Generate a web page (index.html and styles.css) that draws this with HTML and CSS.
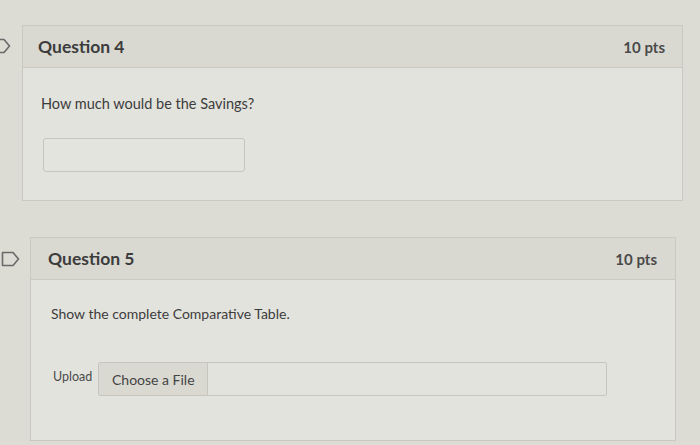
FILE: index.html
```html
<!DOCTYPE html>
<html>
<head>
<meta charset="utf-8">
<link rel="stylesheet" href="styles.css">
</head>
<body>
<div class="page">
  <section class="card card-q4">
    <div class="flag flag-q4">
      <svg width="20" height="16" viewBox="0 0 20 16"><path d="M1.5 1.5 H12 L17.5 8 L12 14.5 H1.5 Z" fill="none" stroke="#6a6a6a" stroke-width="1.6" stroke-linejoin="round"/></svg>
    </div>
    <header class="card-head">
      <h2 class="q-title">Question 4</h2>
      <span class="pts">10 pts</span>
    </header>
    <div class="card-body body-q4">
      <p class="q-text">How much would be the Savings?</p>
      <div class="answer-box"></div>
    </div>
  </section>

  <section class="card card-q5">
    <div class="flag flag-q5">
      <svg width="20" height="16" viewBox="0 0 20 16"><path d="M1.5 1.5 H12 L17.5 8 L12 14.5 H1.5 Z" fill="none" stroke="#6a6a6a" stroke-width="1.6" stroke-linejoin="round"/></svg>
    </div>
    <header class="card-head">
      <h2 class="q-title">Question 5</h2>
      <span class="pts">10 pts</span>
    </header>
    <div class="card-body body-q5">
      <p class="q-text">Show the complete Comparative Table.</p>
      <div class="upload-row">
        <span class="upload-label">Upload</span>
        <div class="file-field">
          <span class="file-btn">Choose a File</span>
        </div>
      </div>
    </div>
  </section>
</div>
</body>
</html>
```

FILE: styles.css
```css
html, body {
  margin: 0;
  padding: 0;
}
body {
  width: 700px;
  height: 445px;
  overflow: hidden;
  background: #dcdcd5;
  font-family: Lato, "Liberation Sans", sans-serif;
  color: #3b3b3b;
}
.page {
  display: flex;
  flex-direction: column;
  padding-top: 25px;
}
.card {
  position: relative;
  background: #e3e3dd;
  border: 1px solid #c9c9c2;
  box-sizing: border-box;
}
.card-q4 {
  margin-left: 22px;
  width: 661px;
  height: 176px;
}
.card-q5 {
  margin-left: 30px;
  margin-top: 36px;
  width: 646px;
  height: 204px;
}
.flag {
  position: absolute;
}
.flag-q4 {
  left: -31px;
  top: 12px;
}
.flag-q5 {
  left: -30px;
  top: 13px;
}
.card-head {
  display: flex;
  align-items: center;
  justify-content: space-between;
  height: 42px;
  background: #d9d9d2;
  border-bottom: 1px solid #c9c9c2;
  box-sizing: border-box;
}
.card-q4 .card-head {
  padding: 0 17px 0 15px;
}
.card-q5 .card-head {
  padding: 0 18px 0 17px;
}
.q-title {
  margin: 0;
  font-size: 17.5px;
  font-weight: 700;
  color: #3c3c3c;
}
.pts {
  font-size: 15px;
  font-weight: 700;
  color: #4a4a4a;
}
.card-body {
  display: flex;
  flex-direction: column;
}
.body-q4 {
  padding: 27px 0 0 18px;
}
.body-q5 {
  padding: 25px 0 0 20px;
}
.q-text {
  margin: 0;
  font-size: 14px;
  color: #3c3c3c;
}
.body-q4 .q-text {
  font-size: 14.5px;
}
.answer-box {
  margin-top: 26px;
  margin-left: 2px;
  width: 202px;
  height: 34px;
  border: 1px solid #c6c6bf;
  border-radius: 3px;
  box-sizing: border-box;
  background: #e4e4de;
}
.upload-row {
  display: flex;
  align-items: center;
  margin-top: 40px;
  margin-left: 2px;
}
.upload-label {
  font-size: 12.5px;
  color: #4a4a4a;
  width: 45px;
  margin-top: -6px;
}
.file-field {
  display: flex;
  align-items: stretch;
  width: 509px;
  height: 34px;
  border: 1px solid #c6c6bf;
  box-sizing: border-box;
  border-radius: 2px;
}
.file-btn {
  display: flex;
  align-items: center;
  padding: 0 0 0 13px;
  width: 109px;
  box-sizing: border-box;
  white-space: nowrap;
  background: #d9d9d2;
  border-right: 1px solid #c6c6bf;
  font-size: 14px;
  color: #444;
}
```
